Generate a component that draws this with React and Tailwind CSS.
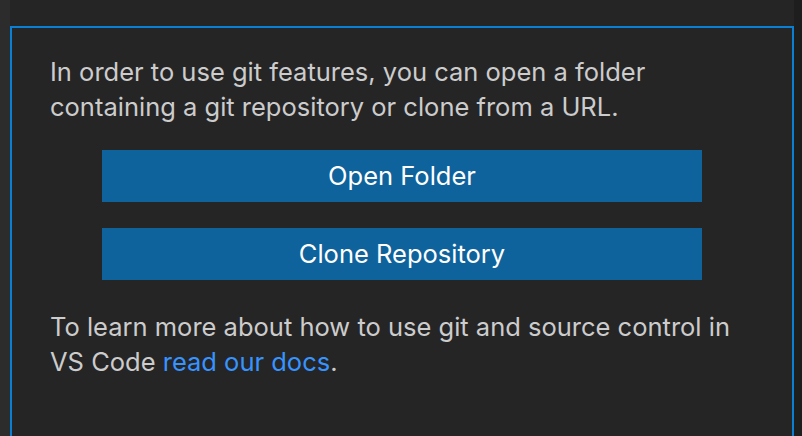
import React from "react";

const App = () => {
  return (
    <div className="w-[802px] h-[436px] bg-[#252526] flex overflow-hidden font-['Inter','Liberation_Sans',sans-serif] text-[25.5px] text-[#cccccc]">
      <div className="w-[10px] bg-[#2c2c2c]"></div>

      <div className="flex-1 flex flex-col">
        <div className="h-[26px] overflow-hidden">
          <p className="-mt-[25px] pl-[52px] text-[17px] leading-[20px] text-[#6f6f6f]">
            Source Control Providers
          </p>
        </div>

        <div className="flex-1 border-2 border-b-0 border-[#0a7fd4] pt-[26px]">
          <p className="px-[38px] leading-[35px]">
            In order to use git features, you can open a folder
            <br />
            containing a git repository or clone from a URL.
          </p>

          <div className="w-[600px] mx-auto mt-[26px] flex flex-col gap-[26px]">
            <button className="h-[52px] bg-[#0e639c] text-white text-[25.5px]">
              Open Folder
            </button>
            <button className="h-[52px] bg-[#0e639c] text-white text-[25.5px]">
              Clone Repository
            </button>
          </div>

          <p className="px-[38px] mt-[29px] leading-[35px]">
            To learn more about how to use git and source control in
            <br />
            VS Code <a className="text-[#3794ff]">read our docs</a>.
          </p>
        </div>
      </div>

      <div className="w-[8px] bg-[#1e1e1e]"></div>
    </div>
  );
};
export default App;
